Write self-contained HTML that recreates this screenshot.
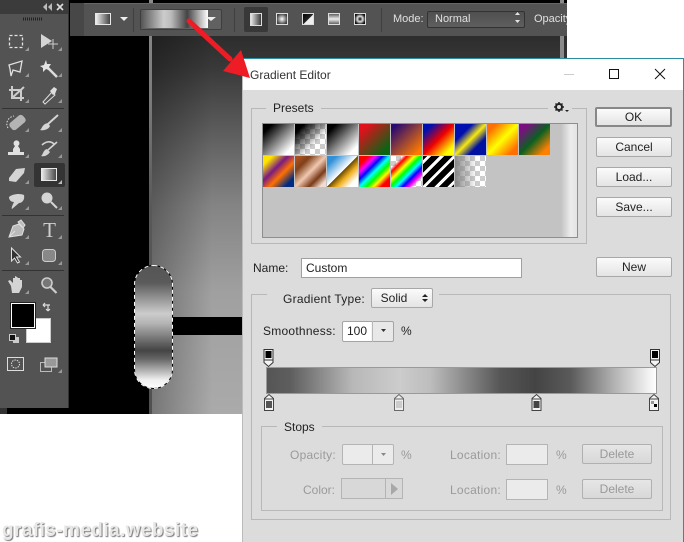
<!DOCTYPE html>
<html><head><meta charset="utf-8"><style>
html,body{margin:0;padding:0;background:#fff}
#r{position:relative;width:684px;height:542px;overflow:hidden;background:#fff;font-family:"Liberation Sans",sans-serif;font-size:12px;color:#222}
#r div,#r span{position:absolute;box-sizing:border-box;white-space:nowrap}
.t{line-height:14px}
.sp{letter-spacing:.25px}
.btn{background:linear-gradient(#fbfbfb,#e4e4e4);border:1px solid #a8a8a8;border-radius:2px;text-align:center;line-height:19px;color:#222}
.dis{color:#9a9a9a}
.dbtn{background:linear-gradient(#e6e6e6,#d8d8d8);border:1px solid #b0b0b0;border-radius:2px;text-align:center;line-height:19px;color:#999}
.inp{background:#ebebeb;border:1px solid #b4b4b4}
.line{background:#b8b8b8}
.sw{width:31px;height:31px;top:0}
</style></head><body><div id="r">

<!-- canvas -->
<div style="left:0;top:0;width:567px;height:414px;background:#000"></div>
<div style="left:149px;top:0;width:4px;height:414px;background:linear-gradient(#8a8a8a 0,#7a7a7a 25%,#585858 50%,#505050 100%)"></div>
<div style="left:152px;top:36px;width:415px;height:378px;background:linear-gradient(90deg,rgba(0,0,0,.3),rgba(0,0,0,0) 60px),linear-gradient(#2d2d2d 0,#383838 8%,#626262 28%,#848484 45%,#a0a0a0 68%,#aaa 100%)"></div>
<div style="left:172px;top:317px;width:72px;height:18px;background:#000"></div>
<div style="left:0;top:408px;width:7px;height:6px;background:#333"></div>
<div style="left:560px;top:0;width:4px;height:58px;background:#8a8a8a"></div>
<div style="left:567px;top:0;width:117px;height:58px;background:#fff"></div>

<!-- pill -->
<svg style="position:absolute;left:130px;top:260px" width="48" height="134">
<defs><linearGradient id="pg" x1="0" y1="0" x2="0" y2="1">
<stop offset="0" stop-color="#555"/><stop offset=".14" stop-color="#5a5a5a"/><stop offset=".39" stop-color="#ccc"/><stop offset=".47" stop-color="#b4b4b4"/><stop offset=".69" stop-color="#444"/><stop offset=".76" stop-color="#666"/><stop offset=".93" stop-color="#f0f0f0"/><stop offset="1" stop-color="#fff"/></linearGradient></defs>
<rect x="4.500" y="5.500" width="38" height="123" rx="19" fill="url(#pg)"/>
<rect x="4.500" y="5.500" width="38" height="123" rx="19" fill="none" stroke="#000" stroke-width="1"/>
<rect x="4.500" y="5.500" width="38" height="123" rx="19" fill="none" stroke="#fff" stroke-width="1" stroke-dasharray="4 3"/>
</svg>

<!-- toolbox -->
<div style="left:0;top:0;width:69px;height:408px;background:#535353;border-right:1px solid #333"></div>
<div style="left:0;top:0;width:68px;height:14px;background:#3b3b3b"></div>
<svg style="position:absolute;left:0;top:0" width="69" height="400" fill="none" stroke="#d4d4d4" stroke-width="1">
<path d="M47 3l-4 4 4 4zM52 3l-4 4 4 4z" fill="#bbb" stroke="none"/>
<path d="M57 4l6 6M63 4l-6 6" stroke="#ddd" stroke-width="1.600"/>
<path d="M23 19h19" stroke="#222" stroke-width="3" stroke-dasharray="1 1"/>
<path d="M2 108.500h62M2 215.500h62M2 270.500h62" stroke="#333"/>
<g fill="#999" stroke="none"><path d="M29 47v4h-4zM62 47v4h-4zM29 73v4h-4zM62 73v4h-4zM29 99v4h-4zM62 99v4h-4zM29 128v4h-4zM62 128v4h-4zM29 154v4h-4zM62 154v4h-4zM29 180v4h-4zM29 206v4h-4zM62 206v4h-4zM29 235v4h-4zM62 235v4h-4zM29 261v4h-4zM62 261v4h-4zM29 290v4h-4zM62 369v4h-4z"/></g>
<rect x="9.500" y="35.500" width="13" height="12" stroke-dasharray="3 2" stroke-width="1.300" stroke="#e4e4e4"/>
<path d="M41 34l11 7-11 7z" fill="#d4d4d4" stroke="none"/><path d="M53 39v10M48 44h10" stroke="#ccc"/>
<path d="M9 65l13-4-2 11-7-2-2 6-1-7z" stroke="#e0e0e0" stroke-width="1.300"/>
<path d="M47 67l10 10" stroke="#ddd" stroke-width="2.500"/><path d="M46 60l1 4 4 0-2 3 2 4-5-2-3 3 0-4-3-2 4-1z" fill="#e4e4e4" stroke="none"/>
<path d="M12 86v12h12M9 90h12v11M24 87l-12 11" stroke="#ccc" stroke-width="2"/>
<path d="M43 102l9-10 3 3-10 9z" stroke="#ddd"/><path d="M50 91l4-4 3 2-2 5-2 1z" fill="#ddd" stroke="none"/>
<rect x="9" y="118" width="17" height="9" rx="3" transform="rotate(-40 17.500 122.500)" fill="#b4b4b4" stroke="none"/><path d="M8 128c-3-5 0-11 6-12" stroke="#e4e4e4" stroke-dasharray="1.500 1.500"/>
<path d="M48 124l10-9" stroke="#d4d4d4" stroke-width="2"/><path d="M40 130c2-1 2-6 8-7l2 3c-1 3-6 5-10 4z" fill="#d4d4d4" stroke="none"/>
<path d="M13 152v-3l2-3a3 3 0 1 1 3 0l2 3v3zM8 152h16v3h-16z" fill="#e0e0e0" stroke="none"/>
<path d="M42 145c4-4 9-4 12-1M57 142l-9 8" stroke="#d4d4d4" stroke-width="1.600"/><path d="M41 156c2-1 2-6 6-7l3 3c-2 3-5 5-9 4z" fill="#d4d4d4" stroke="none"/>
<path d="M9 178l7-9 9-1-1 5-8 9-7-1z" fill="#d4d4d4" stroke="none"/>
<rect x="34" y="163" width="31" height="24" rx="2" fill="#343434" stroke="none"/>
<path d="M62 180v4h-4z" fill="#bbb" stroke="none"/>
<rect x="41.500" y="168.500" width="15" height="12" fill="url(#ig)" stroke="#e8e8e8"/>
<path d="M9 197c3-3 11-4 15-2 1 5-2 8-5 8l-7 6c-1-1 1-5 2-7-3 0-5-2-5-5z" fill="#d4d4d4" stroke="none"/>
<circle cx="47" cy="198" r="5.500" fill="#d4d4d4" stroke="none"/><path d="M51 202l6 6" stroke="#d4d4d4" stroke-width="2"/>
<path d="M9 237l4-11 6-2 5 5-2 6zM9 237l6-6M18 222l3-2 4 5-2 3z" fill="#bbb" stroke="#e0e0e0"/>
<text x="49.500" y="237" text-anchor="middle" font-family="Liberation Serif" font-size="21" fill="#cfcfcf" stroke="none">T</text>
<path d="M11.500 248v13l3-3 3 5 2-1-3-5h4z" stroke="#e0e0e0" fill="#333"/>
<rect x="42.500" y="249.500" width="13" height="12" rx="3" fill="#888" stroke="#ccc"/>
<path d="M11 286l-3-5 2-1 3 3v-5l2 0 0-2 2 1 1 1 2 0 0 2 2 0 0 7-3 6h-7z" fill="#d4d4d4" stroke="none"/>
<circle cx="47" cy="283" r="5" fill="#777" stroke="#ccc" stroke-width="1.600"/><path d="M50.500 287l6 6" stroke="#ccc" stroke-width="2.200"/>
<path d="M43 305h7M43 305l2-2M43 305l2 2M48 305v6M48 311l-2-2M48 311l2-2" stroke="#ddd" stroke-width="1.200"/>
<rect x="13" y="337" width="6" height="6" fill="#ccc" stroke="none"/><rect x="9.500" y="334.500" width="6" height="6" fill="#111" stroke="#ccc"/>
<rect x="7.500" y="357.500" width="16" height="13" stroke="#ddd"/><circle cx="15.500" cy="364" r="4" stroke="#ddd" stroke-dasharray="1.500 1"/>
<rect x="40.500" y="362.500" width="11" height="9" stroke="#bbb"/><rect x="45" y="358" width="12" height="9" fill="#999" stroke="#ddd"/>
<defs><linearGradient id="ig"><stop offset="0" stop-color="#eee"/><stop offset="1" stop-color="#444"/></linearGradient></defs>
</svg>
<div style="left:11px;top:303px;width:24px;height:25px;background:#000;border:1px solid #fff;z-index:2;outline:1px solid #222"></div>
<div style="left:26px;top:318px;width:25px;height:25px;background:#fff;border:1px solid #ccc"></div>

<!-- options bar -->
<div style="left:70px;top:3px;width:497px;height:33px;background:#535353;border-top:1px solid #666"></div>
<div style="left:70px;top:3px;width:14px;height:33px;background:#474747"></div>
<div style="left:95px;top:13px;width:16px;height:12px;background:linear-gradient(90deg,#eee,#444);border:1px solid #e8e8e8"></div>
<div style="left:140px;top:9px;width:82px;height:21px;background:#616161;border:1px solid #3e3e3e;border-radius:2px"></div>
<div style="left:141px;top:10px;width:67px;height:18px;background:linear-gradient(90deg,#555 0,#ccc 34%,#bbb 45%,#444 69%,#fff 100%)"></div>
<div style="left:244px;top:7px;width:24px;height:25px;background:#383838;border-radius:2px"></div>
<div style="left:427px;top:11px;width:98px;height:17px;background:linear-gradient(#4f4f4f,#5e5e5e);border:1px solid #333;border-radius:2px"></div>
<svg style="position:absolute;left:70px;top:0" width="497" height="36" fill="#ddd">
<path d="M50 17h8l-4 4zM136 17h10l-5 4z" fill="#eee"/>
<path d="M63.500 8v24M164.500 8v24M311.500 8v24" stroke="#3f3f3f"/>
<g stroke="#ddd" stroke-width="1">
<rect x="180.500" y="13.500" width="11" height="12" fill="url(#o1)"/>
<rect x="206.500" y="13.500" width="11" height="11" fill="url(#o2)"/>
<rect x="232.500" y="13.500" width="11" height="11" fill="url(#o3)"/>
<rect x="258.500" y="13.500" width="11" height="11" fill="url(#o4)"/>
<rect x="284.500" y="13.500" width="11" height="11" fill="url(#o5)"/>
</g>
<path d="M446 15l2.500-3 2.500 3zM446 20l2.500 3 2.500-3z" fill="#e4e4e4" transform="translate(-1,0)"/>
<defs>
<linearGradient id="o1"><stop offset="0" stop-color="#eee"/><stop offset="1" stop-color="#333"/></linearGradient>
<radialGradient id="o2"><stop offset="0" stop-color="#fff"/><stop offset="1" stop-color="#444"/></radialGradient>
<linearGradient id="o3" x1="0" y1="0" x2="1" y2="1"><stop offset="0" stop-color="#000"/><stop offset=".5" stop-color="#222"/><stop offset=".55" stop-color="#eee"/></linearGradient>
<linearGradient id="o4" x1="0" y1="0" x2="0" y2="1"><stop offset="0" stop-color="#555"/><stop offset=".5" stop-color="#eee"/><stop offset="1" stop-color="#555"/></linearGradient>
<radialGradient id="o5"><stop offset="0" stop-color="#000"/><stop offset=".5" stop-color="#ddd"/><stop offset="1" stop-color="#111"/></radialGradient>
</defs></svg>
<span class="t" style="left:393px;top:12px;color:#e0e0e0;font-size:11px">Mode:</span>
<span class="t" style="left:435px;top:12px;color:#e0e0e0;font-size:11px">Normal</span>
<span class="t" style="left:534px;top:12px;color:#e0e0e0;font-size:11px;width:33px;overflow:hidden">Opacity</span>

<!-- dialog -->
<div style="left:242px;top:58px;width:442px;height:484px;background:#dcdcdc;border-top:1px solid #2b8fa3;border-right:1px solid #2b8fa3;border-left:1px solid #bbb"></div>
<div style="left:243px;top:59px;width:440px;height:31px;background:#fff"></div>
<span class="t" style="left:250px;top:68px;color:#333;font-size:12px">Gradient Editor</span>
<svg style="position:absolute;left:560px;top:64px" width="120" height="22" fill="none" stroke="#111">
<path d="M4 10.500h10" stroke="#ccc"/><rect x="49.500" y="5.500" width="9" height="9"/><path d="M95 5l10 10M105 5l-10 10"/></svg>

<!-- Presets -->
<div class="line" style="left:251px;top:108px;width:336px;height:1px"></div>
<div class="line" style="left:251px;top:108px;width:1px;height:136px"></div>
<div class="line" style="left:586px;top:108px;width:1px;height:136px"></div>
<div class="line" style="left:251px;top:243px;width:336px;height:1px"></div>
<span class="t" style="left:266px;top:101px;background:#dcdcdc;padding:0 7px;color:#222">Presets</span>
<span style="left:548px;top:100px;width:24px;height:14px;background:#dcdcdc"></span>
<svg style="position:absolute;left:552px;top:100px" width="18" height="14"><circle cx="7" cy="7" r="3" fill="none" stroke="#222" stroke-width="2"/><path d="M7 2v2M7 10v2M2 7h2M10 7h2M3.500 3.500l1.500 1.500M9 9l1.500 1.500M10.500 3.500l-1.500 1.500M5 9l-1.500 1.500" stroke="#222" stroke-width="1.500"/><path d="M13 10h4l-2 2z" fill="#222"/></svg>
<div style="left:262px;top:123px;width:316px;height:115px;background:#c3c3c3;border:1px solid #8e8e8e"></div>
<div style="left:561px;top:124px;width:16px;height:113px;background:linear-gradient(90deg,#c3c3c3,#ececec 60%,#e4e4e4)"></div>
<div style="left:263px;top:124px;width:288px;height:64px" id="sw">
<div class="sw" style="left:0;background:linear-gradient(135deg,#000 15%,#fff 85%)"></div>
<div class="sw" style="left:32px;background:linear-gradient(135deg,#000 15%,rgba(0,0,0,0) 65%),conic-gradient(#ccc 25%,#fff 0 50%,#ccc 0 75%,#fff 0) 0 0/10px 10px"></div>
<div class="sw" style="left:64px;background:linear-gradient(135deg,#000 15%,#fff 85%)"></div>
<div class="sw" style="left:96px;background:linear-gradient(135deg,#e0101c 15%,#0a6414 85%)"></div>
<div class="sw" style="left:128px;background:linear-gradient(135deg,#2a0a70 10%,#ff7a00 90%)"></div>
<div class="sw" style="left:160px;background:linear-gradient(135deg,#0010b0 15%,#f00000 50%,#ffff00 85%)"></div>
<div class="sw" style="left:192px;background:linear-gradient(135deg,#0010b0 28%,#f8e810 50%,#0010a0 72%)"></div>
<div class="sw" style="left:224px;background:linear-gradient(135deg,#ff7000 15%,#ffff00 50%,#ff7000 85%)"></div>
<div class="sw" style="left:256px;background:linear-gradient(135deg,#7a1080 15%,#0a6020 50%,#ff8000 85%)"></div>
<div class="sw" style="left:0;top:32px;background:linear-gradient(135deg,#ffe400 15%,#7a1a80 40%,#ff7000 60%,#002a80 85%)"></div>
<div class="sw" style="left:32px;top:32px;background:linear-gradient(135deg,#a85020 8%,#80401a 25%,#f0c8b0 50%,#7a3a18 72%,#f0dcd0 90%)"></div>
<div class="sw" style="left:64px;top:32px;background:linear-gradient(135deg,#3090d8 15%,#fff 49%,#6a4a00 50%,#f0b020 65%,#fff 85%)"></div>
<div class="sw" style="left:96px;top:32px;background:linear-gradient(135deg,#f00 15%,#f0f 27%,#00f 38%,#0ff 50%,#0f0 62%,#ff0 73%,#f00 85%)"></div>
<div class="sw" style="left:128px;top:32px;background:linear-gradient(135deg,transparent 18%,#f00 26%,#ff0 38%,#0f0 48%,#0ff 58%,#00f 68%,#f0f 78%,transparent 86%),conic-gradient(#ccc 25%,#fff 0 50%,#ccc 0 75%,#fff 0) 0 0/10px 10px"></div>
<div class="sw" style="left:160px;top:32px;background:repeating-linear-gradient(135deg,#000 0 3px,#fff 3px 6px,#000 6px 9px) 0 0,#000"></div>
<div class="sw" style="left:192px;top:32px;background:linear-gradient(90deg,#888,rgba(136,136,136,0) 70%),conic-gradient(#ccc 25%,#fff 0 50%,#ccc 0 75%,#fff 0) 0 0/10px 10px"></div>
</div>

<!-- right buttons -->
<div class="btn" style="left:595px;top:107px;width:77px;height:20px;border:2px solid #888;line-height:17px">OK</div>
<div class="btn" style="left:596px;top:137px;width:76px;height:20px">Cancel</div>
<div class="btn" style="left:596px;top:167px;width:76px;height:20px">Load...</div>
<div class="btn" style="left:596px;top:197px;width:76px;height:20px">Save...</div>

<!-- name -->
<span class="t" style="left:253px;top:261px">Name:</span>
<div style="left:301px;top:258px;width:221px;height:20px;background:#fff;border:1px solid #a0a0a0;padding-left:4px;line-height:18px">Custom</div>
<div class="btn" style="left:596px;top:257px;width:76px;height:20px">New</div>

<!-- gradient type group -->
<div class="line" style="left:251px;top:294px;width:420px;height:1px"></div>
<div class="line" style="left:251px;top:294px;width:1px;height:226px"></div>
<div class="line" style="left:670px;top:294px;width:1px;height:226px"></div>
<div class="line" style="left:251px;top:519px;width:420px;height:1px"></div>
<span style="left:267px;top:285px;width:172px;height:20px;background:#dcdcdc"></span>
<span class="t sp" style="left:283px;top:292px">Gradient Type:</span>
<div class="btn" style="left:371px;top:288px;width:62px;height:20px;padding-right:18px;padding-left:2px">Solid</div>
<svg style="position:absolute;left:421px;top:293px" width="8" height="10" fill="#222"><path d="M1 4l3-3 3 3zM1 6l3 3 3-3z"/></svg>

<span class="t sp" style="left:263px;top:324px">Smoothness:</span>
<div style="left:342px;top:321px;width:52px;height:21px;background:linear-gradient(90deg,#fff 57%,#e8e8e8 57%);border:1px solid #a4a4a4;border-radius:2px;padding-left:4px;line-height:19px">100</div>
<div class="line" style="left:372px;top:321px;width:1px;height:21px"></div>
<svg style="position:absolute;left:380px;top:328px" width="8" height="6"><path d="M1 1h5l-2.500 3z" fill="#333"/></svg>
<span class="t" style="left:401px;top:324px">%</span>

<!-- gradient bar -->
<div style="left:266px;top:367px;width:391px;height:27px;background:linear-gradient(90deg,#555 0,#5e5e5e 6%,#b8b8b8 22%,#ccc 34%,#bdbdbd 42%,#565656 60%,#444 69%,#5a5a5a 78%,#b8b8b8 90%,#fff 100%);border:1px solid #9a9a9a"></div>
<svg style="position:absolute;left:260px;top:348px" width="404" height="66">
<defs><g id="top"><path d="M.5.500h9v13l-4.500 4-4.500-4z" fill="#f4f4f4" stroke="#333"/><rect x="2" y="2" width="6" height="7" fill="#000"/><path d="M.5 11h9" stroke="#333"/></g>
<g id="bot"><path d="M5 .500l4.500 4v12h-9v-12z" fill="#f4f4f4" stroke="#444"/><path d="M.5 5h9" stroke="#444"/></g></defs>
<use href="#top" x="3.500" y="1"/><use href="#top" x="390" y="1"/>
<use href="#bot" x="4" y="46"/><rect x="6" y="53" width="6" height="7" fill="#555"/>
<g opacity=".75"><use href="#bot" x="134" y="46"/></g><rect x="136" y="53" width="6" height="7" fill="#ccc"/>
<use href="#bot" x="271.500" y="46"/><rect x="273.500" y="53" width="6" height="7" fill="#444"/>
<use href="#bot" x="389" y="46"/><rect x="391" y="53" width="3" height="3" fill="#999"/><rect x="394" y="56" width="3" height="3" fill="#000"/>
</svg>

<!-- Stops -->
<div class="line" style="left:261px;top:426px;width:402px;height:1px"></div>
<div class="line" style="left:261px;top:426px;width:1px;height:85px"></div>
<div class="line" style="left:662px;top:426px;width:1px;height:85px"></div>
<div class="line" style="left:261px;top:510px;width:402px;height:1px"></div>
<span class="t" style="left:277px;top:420px;background:#dcdcdc;padding:0 7px;color:#222">Stops</span>

<span class="t dis sp" style="left:290px;top:448px">Opacity:</span>
<div class="inp" style="left:342px;top:444px;width:52px;height:21px;border-radius:2px"></div>
<div style="left:372px;top:444px;width:1px;height:21px;background:#b4b4b4"></div>
<svg style="position:absolute;left:380px;top:452px" width="8" height="6"><path d="M1 1h5l-2.500 3z" fill="#888"/></svg>
<span class="t dis" style="left:401px;top:448px">%</span>
<span class="t dis sp" style="left:450px;top:448px">Location:</span>
<div class="inp" style="left:506px;top:444px;width:42px;height:21px"></div>
<span class="t dis" style="left:556px;top:448px">%</span>
<div class="dbtn" style="left:582px;top:444px;width:70px;height:20px">Delete</div>

<span class="t dis" style="left:303px;top:483px">Color:</span>
<div style="left:341px;top:478px;width:62px;height:21px;background:#d8d8d8;border:1px solid #b4b4b4"></div>
<div style="left:385px;top:478px;width:1px;height:21px;background:#b4b4b4"></div>
<svg style="position:absolute;left:390px;top:482px" width="10" height="14"><path d="M1 1l7 6-7 6z" fill="#a8a8a8"/></svg>
<span class="t dis sp" style="left:450px;top:483px">Location:</span>
<div class="inp" style="left:506px;top:479px;width:42px;height:21px"></div>
<span class="t dis" style="left:556px;top:483px">%</span>
<div class="dbtn" style="left:582px;top:479px;width:70px;height:20px">Delete</div>

<!-- arrow -->
<svg style="position:absolute;left:180px;top:10px" width="80" height="80"><path d="M9 11L50 49" stroke="#ee1c25" stroke-width="5" stroke-linecap="round"/><path d="M70 68L43 61 61 40z" fill="#ee1c25"/></svg>

<!-- watermark -->
<span style="left:2px;top:520px;font-size:19px;letter-spacing:.42px;font-weight:bold;line-height:22px;color:#e8e8e8;text-shadow:1px 1px 1px #777">grafis-media.website</span>
</div></body></html>
